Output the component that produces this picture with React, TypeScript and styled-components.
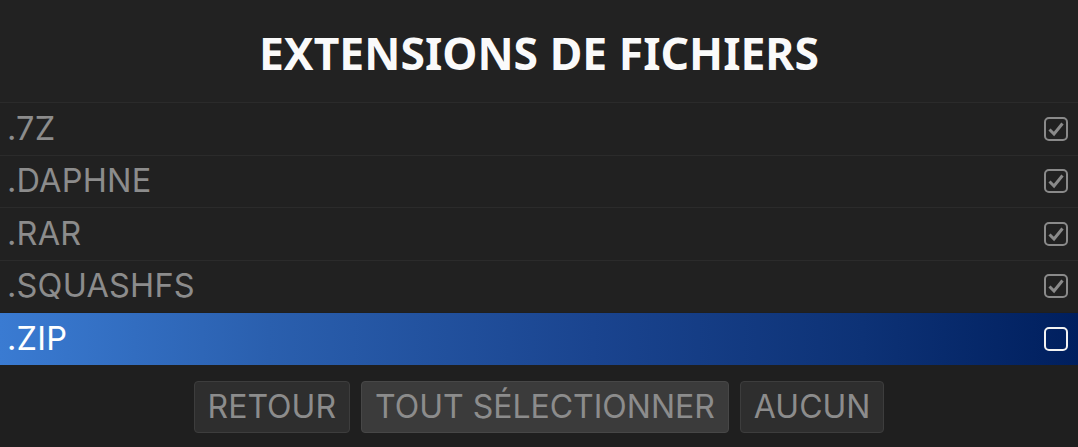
import React from 'react'
import styled, { createGlobalStyle } from 'styled-components'

const GlobalStyle = createGlobalStyle`
    html, body {
        margin: 0;
        padding: 0;
        background: #1f1f1f;
    }
    body {
        font-family: 'Noto Sans', 'Open Sans', sans-serif;
    }
`

const Screen = styled.div`
    width: 1078px;
    height: 447px;
    display: flex;
    flex-direction: column;
    background: #1f1f1f;
    overflow: hidden;
`

const Header = styled.div`
    height: 102px;
    display: flex;
    align-items: center;
    justify-content: center;
    background: #222222;
`

const Title = styled.h1`
    margin: 0;
    color: #fafafa;
    font-size: 44.5px;
    font-weight: 700;
    padding-top: 2px;
`

const List = styled.div`
    display: flex;
    flex-direction: column;
    background: #212121;
`

const Row = styled.div<{ $selected?: boolean }>`
    height: 52.5px;
    box-sizing: border-box;
    border-top: 1px solid ${p => p.$selected ? '#1f1f1f' : '#2b2b2b'};
    display: flex;
    align-items: center;
    justify-content: space-between;
    padding: 0 10px 0 7px;
    background: ${p => p.$selected
        ? 'linear-gradient(90deg, #3a7bd2 0%, #2a5fae 25%, #1a448f 55%, #0d3276 80%, #001f5e 100%)'
        : 'transparent'};
`

const Label = styled.span<{ $selected?: boolean }>`
    font-family: 'Inter', 'Noto Sans', sans-serif;
    font-size: 32.5px;
    letter-spacing: 0.2px;
    color: ${p => p.$selected ? '#ffffff' : '#8c8c8c'};
    line-height: 1;
`

const Box = styled.div<{ $selected?: boolean }>`
    width: 24px;
    height: 24px;
    box-sizing: border-box;
    border: 2px solid ${p => p.$selected ? '#f2f2f2' : '#8a8a8a'};
    border-radius: 5px;
    display: flex;
    align-items: center;
    justify-content: center;
`

const Footer = styled.div`
    flex: 1;
    display: flex;
    justify-content: center;
    align-items: flex-start;
    gap: 11px;
    padding-top: 16px;
`

const Button = styled.button<{ $focused?: boolean }>`
    height: 52px;
    box-sizing: border-box;
    padding: 0 13px;
    border-radius: 4px;
    border: 1px solid ${p => p.$focused ? '#474747' : '#3d3d3d'};
    background: ${p => p.$focused ? '#3b3b3b' : '#2e2e2e'};
    color: #8c8c8c;
    font-family: 'Inter', 'Noto Sans', sans-serif;
    font-size: 32px;
    line-height: 1;
`

const Check = () => (
    <svg width="18" height="18" viewBox="0 0 18 18">
        <path d="M2.5 9.5 L7 14 L15.5 3.5" fill="none" stroke="#8a8a8a" strokeWidth="3" strokeLinejoin="miter" />
    </svg>
)

const items = [
    { name: '.7Z', checked: true },
    { name: '.DAPHNE', checked: true },
    { name: '.RAR', checked: true },
    { name: '.SQUASHFS', checked: true },
    { name: '.ZIP', checked: false, selected: true },
]

const App = () => {
    return (
        <Screen>
            <GlobalStyle />
            <Header>
                <Title>EXTENSIONS DE FICHIERS</Title>
            </Header>
            <List>
                {items.map(item => (
                    <Row key={item.name} $selected={item.selected}>
                        <Label $selected={item.selected}>{item.name}</Label>
                        <Box $selected={item.selected}>{item.checked && <Check />}</Box>
                    </Row>
                ))}
            </List>
            <Footer>
                <Button>RETOUR</Button>
                <Button $focused>TOUT SÉLECTIONNER</Button>
                <Button>AUCUN</Button>
            </Footer>
        </Screen>
    )
}

export default App
